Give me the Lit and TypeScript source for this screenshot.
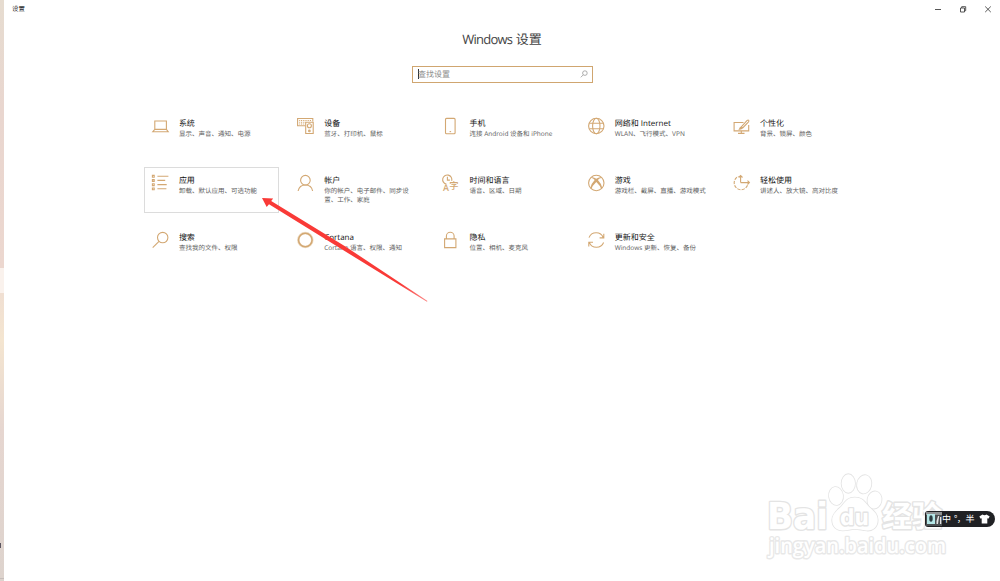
import { html, css, svg, LitElement, nothing } from "lit";
import type { SVGTemplateResult } from "lit";
import { customElement, property } from "lit/decorators.js";
import { classMap } from "lit/directives/class-map.js";

interface Category {
    icon: string;
    title: string;
    description: string;
    active?: boolean;
}

const categories: Category[] = [
    { icon: "system", title: "系统", description: "显示、声音、通知、电源" },
    { icon: "devices", title: "设备", description: "蓝牙、打印机、鼠标" },
    { icon: "phone", title: "手机", description: "连接 Android 设备和 iPhone" },
    { icon: "network", title: "网络和 Internet", description: "WLAN、飞行模式、VPN" },
    { icon: "personalize", title: "个性化", description: "背景、锁屏、颜色" },
    { icon: "apps", title: "应用", description: "卸载、默认应用、可选功能", active: true },
    { icon: "account", title: "帐户", description: "你的帐户、电子邮件、同步设置、工作、家庭" },
    { icon: "time", title: "时间和语言", description: "语音、区域、日期" },
    { icon: "gaming", title: "游戏", description: "游戏栏、截屏、直播、游戏模式" },
    { icon: "ease", title: "轻松使用", description: "讲述人、放大镜、高对比度" },
    { icon: "search", title: "搜索", description: "查找我的文件、权限" },
    { icon: "cortana", title: "Cortana", description: "Cortana 语言、权限、通知" },
    { icon: "privacy", title: "隐私", description: "位置、相机、麦克风" },
    { icon: "update", title: "更新和安全", description: "Windows 更新、恢复、备份" },
];

const icons: Record<string, SVGTemplateResult> = {
    system: svg`<path d="M2.8 3h11.6v8.4H2.8zM2.8 11.4L.8 13.7h15.4l-1.8-2.3"/>`,
    devices: svg`
        <path d="M8 7.7H.6V.5h15.2v3"/>
        <path d="M2.2 2.5h12.4M2.2 4.2h6M2.2 6h5.6" stroke-dasharray="1 .8"/>
        <path d="M8.7 4.2h7.5v11.3H8.7z"/>
        <circle cx="12.4" cy="7.8" r="2"/>
        <circle cx="12.4" cy="12.9" r=".8"/>`,
    phone: svg`<rect x="3.5" y=".4" width="9.6" height="15.3" rx="1"/><path d="M7.6 13.6h1.5"/>`,
    network: svg`
        <circle cx="8.3" cy="8" r="7.7"/>
        <ellipse cx="8.3" cy="8" rx="3.7" ry="7.7"/>
        <path d="M1.3 5.2h14M1.3 10.8h14"/>`,
    personalize: svg`
        <path d="M10.5 4.5H1.1v8.4h14.6V7M8.3 13v2.2M5 15.4h6.5"/>
        <path d="M8.3 8.8l5.6-6.1q1.2-1 1.8-.4t-.4 1.8L9.7 10z"/>
        <path class="solid" d="M8.3 8.8q-1.8-.1-2.1 1.6-.2 1-1.2 1.2 3.8.8 4.7-1.6z"/>`,
    apps: svg`
        <path d="M.4.4h1.8v1.8H.4zM.4 4.6h1.8v1.8H.4zM.4 8.8h1.8v1.8H.4zM.4 13h1.8v1.8H.4z"/>
        <path d="M5.4 1.2h11M5.4 5.4h7.8M5.4 9.6h9.3M5.4 13.8h9"/>`,
    account: svg`<circle cx="8.4" cy="5.2" r="4.8"/><path d="M1.1 16c.8-4 3.6-6 7.3-6s6.5 2 7.2 6"/>`,
    time: svg`
        <path d="M4.4 9.1A4.6 4.6 0 1 1 9.7 5.8M5.4 1.8v3.3h2.5"/>
        <text class="glyph latin" x=".9" y="16">A</text>
        <text class="glyph" x="7.2" y="13.8">字</text>`,
    gaming: svg`
        <circle cx="8.3" cy="8" r="7.7"/>
        <path class="solid" d="M3.5 2.3q2.1-.6 4.8 1.4 2.7-2 4.8-1.4l.7.8q-2-.4-3.9 2 3.7 4 4.3 7.6l-1 1.2q-1.1-3.5-4.9-7-3.8 3.5-4.9 7l-1-1.2q.6-3.6 4.3-7.6-1.9-2.4-3.9-2z"/>`,
    ease: svg`
        <path d="M14.5 10.3A6.9 6.9 0 1 1 5.5 1.4" stroke-dasharray="3.2 1.2"/>
        <path d="M7.6 7.6V.7M5.7 2.5L7.6.6l1.9 1.9M7.6 7.6h8.7M14.5 5.7l1.9 1.9-1.9 1.9"/>`,
    search: svg`<circle cx="10.7" cy="5.6" r="5.2"/><path d="M7 9.4L.7 15.7"/>`,
    cortana: svg`<circle class="halo" cx="8.3" cy="8" r="7"/><circle class="ring" cx="8.3" cy="8" r="6.8"/>`,
    privacy: svg`<path d="M2.6 6.9h11.3v8.7H2.6zM4.4 6.9V4a3.85 3.7 0 0 1 7.7 0v2.9"/>`,
    update: svg`
        <path d="M1 5.6a7.7 7.7 0 0 1 14.3.1M15.8 1.7v4.2h-4.2"/>
        <path d="M15.6 10.5a7.7 7.7 0 0 1-14.3-.1M.8 14.4v-4.2H5"/>`,
};

@customElement("category-tile")
export class CategoryTile extends LitElement {
    static styles = css`
    :host {
        display: block;
    }

    .tile {
        box-sizing: border-box;
        display: flex;
        height: 46px;
        padding: 7px 6px 0 6.4px;
        gap: 10.1px;
        border: 1px solid transparent;
    }

    .tile.active {
        border-color: #dcdcdc;
    }

    svg {
        flex: none;
        width: 17px;
        height: 17px;
        overflow: visible;
        fill: none;
        stroke: #d3a873;
        stroke-width: 1.1;
    }

    .solid, .glyph {
        fill: #d3a873;
        stroke: none;
    }

    .glyph {
        font: 500 9.3px "Noto Sans CJK SC", sans-serif;
    }

    .glyph.latin {
        font: 600 9px "Open Sans", sans-serif;
    }

    .ring {
        stroke-width: 1.5;
    }

    .halo {
        stroke: #efdfc9;
        stroke-width: 2.6;
    }

    .title {
        margin-top: 1px;
        font-size: 8px;
        line-height: 10px;
        color: #111;
        white-space: nowrap;
    }

    .description {
        width: 93px;
        font-size: 6.5px;
        line-height: 8.7px;
        color: #606060;
        margin-top: 1px;
    }
    `;

    @property() icon = "";
    @property() heading = "";
    @property() description = "";
    @property({ type: Boolean }) active = false;

    render() {
        return html`
            <div class=${classMap({ tile: true, active: this.active })}>
                <svg viewBox="0 0 17 17">${icons[this.icon] ?? nothing}</svg>
                <div>
                    <div class="title">${this.heading}</div>
                    <div class="description">${this.description}</div>
                </div>
            </div>
        `;
    }
}

@customElement("site-watermark")
export class SiteWatermark extends LitElement {
    static styles = css`
    :host {
        display: block;
        width: 190px;
        height: 95px;
    }

    svg {
        display: block;
        fill: #fff;
        stroke: #e4e4e4;
        stroke-width: 1.7;
        stroke-linejoin: round;
        paint-order: stroke;
    }

    text {
        stroke-width: 2.8;
    }

    .brand {
        font: bold 37px "DejaVu Sans", sans-serif;
    }

    .pad-text {
        font: bold 22px "DejaVu Sans", sans-serif;
    }

    .cjk {
        font: bold 30px "Noto Sans CJK SC", sans-serif;
    }

    .site {
        font: 600 21px "Open Sans", sans-serif;
        stroke: #e8e8e8;
    }
    `;

    render() {
        return html`
            <svg width="190" height="95" viewBox="0 0 190 95">
                <text class="brand" x="2" y="64" textLength="61" lengthAdjust="spacingAndGlyphs">Bai</text>
                <ellipse cx="71" cy="31" rx="7" ry="9" transform="rotate(-8 71 31)"/>
                <ellipse cx="83.3" cy="18.5" rx="6.7" ry="9.3"/>
                <ellipse cx="99.2" cy="19.3" rx="7.1" ry="9.2" transform="rotate(12 99.2 19.3)"/>
                <ellipse cx="109.5" cy="35" rx="7" ry="8.6" transform="rotate(10 109.5 35)"/>
                <path d="M89.7 32.5c8 0 10.500 5 14 9 4 4 9 7 9 13.500 0 7-5 11-11 10.500-5-.5-8-1.500-12-1.500s-7 1.500-12 1.500c-6 0-10.500-4-10.500-10.500 0-6 5-9.500 9-13.500 3.500-4 6-9 13.500-9z"/>
                <text class="pad-text" x="75" y="60" textLength="29" lengthAdjust="spacingAndGlyphs">du</text>
                <text class="cjk" x="117" y="62">经验</text>
                <text class="site" x="4" y="88" textLength="177" lengthAdjust="spacingAndGlyphs">jingyan.baidu.com</text>
            </svg>
        `;
    }
}

@customElement("app-root")
export class AppRoot extends LitElement {
    static styles = css`
    :host {
        display: flex;
        position: relative;
        width: 1000px;
        height: 581px;
        overflow: hidden;
        background: #fff;
        font-family: "Open Sans", "Noto Sans CJK SC", sans-serif;
        text-rendering: geometricPrecision;
    }

    .desktop {
        flex: none;
        display: flex;
        flex-flow: column;
        width: 4px;
        background: linear-gradient(#e6dcd0 0, #e9d6cf 110px, #ecd7cf 268px, #f0dfd2 294px, #f4e5d0 340px, #e6d6d0 430px, #ddd3cd 581px);
    }

    .desktop .band {
        height: 25px;
        margin-top: 268px;
        background: #faf2ed;
    }

    .desktop .mark {
        width: 1px;
        height: 5px;
        margin-top: 250px;
        background: #5c5560;
    }

    .desktop .edge {
        height: 1px;
        margin-top: 30px;
        background: #c6bdb9;
    }

    .window {
        flex: 1;
        display: flex;
        flex-flow: column;
    }

    .titlebar {
        display: flex;
        justify-content: space-between;
        height: 17px;
        padding: 0 8px;
        align-items: center;
        font-size: 6.4px;
        color: #222;
    }

    .titlebar svg {
        display: block;
        fill: none;
        stroke: #444;
        stroke-width: 0.9;
    }

    .buttons {
        display: flex;
        gap: 17px;
    }

    h1 {
        margin: 12px 0 0;
        font-size: 13px;
        font-weight: 400;
        line-height: 20px;
        text-align: center;
        color: #444;
    }

    h1 .latin {
        letter-spacing: -0.75px;
    }

    .search {
        box-sizing: border-box;
        display: flex;
        align-items: center;
        align-self: center;
        width: 181px;
        height: 17px;
        margin: 17px 0 0;
        padding: 0 4px 1px 5px;
        border: 1px solid #d0a670;
        font-size: 8px;
        color: #8b8b8b;
    }

    .search .caret {
        width: 1px;
        height: 10px;
        background: #333;
    }

    .search .placeholder {
        flex: 1;
        margin-left: -0.5px;
    }

    .search svg {
        fill: none;
        stroke: #999;
        stroke-width: 0.8;
    }

    .grid {
        display: grid;
        grid-template-columns: repeat(5, 134.4px);
        gap: 11px 10.9px;
        margin: 27px 0 0 140.4px;
    }

    .arrow {
        position: absolute;
        left: 260px;
        top: 195px;
    }

    site-watermark {
        position: absolute;
        left: 765px;
        top: 465px;
    }

    .ime {
        position: absolute;
        left: 925px;
        top: 510.5px;
        box-sizing: border-box;
        display: flex;
        align-items: center;
        width: 69.5px;
        height: 16px;
        padding: 0 5px 0 1px;
        border-radius: 3px 8px 8px 3px;
        background: #202124;
        color: #fff;
        font: 9px "Noto Sans CJK SC", sans-serif;
    }

    .ime .logo {
        flex: none;
        width: 16px;
        height: 14px;
    }

    .ime .punct {
        flex: 1;
        padding-left: 3px;
        white-space: nowrap;
        letter-spacing: -0.5px;
    }

    .ime .half {
        margin-right: 4px;
    }

    .ime .skin {
        flex: none;
    }
    `;

    render() {
        return html`
            <div class="desktop">
                <div class="band"></div>
                <div class="mark"></div>
                <div class="edge"></div>
            </div>
            <div class="window">
                <div class="titlebar">
                    <span>设置</span>
                    <div class="buttons">
                        <svg width="8" height="8" viewBox="0 0 8 8"><path d="M1 4.5h6"/></svg>
                        <svg width="8" height="8" viewBox="0 0 8 8"><path d="M1.500 3h4v4h-4zM2.700 3V1.700h4v4H5.500"/></svg>
                        <svg width="8" height="8" viewBox="0 0 8 8"><path d="M1.200 1.500l5.600 5.600M6.800 1.500L1.200 7.100"/></svg>
                    </div>
                </div>
                <h1><span class="latin">Windows</span> 设置</h1>
                <div class="search">
                    <span class="caret"></span>
                    <span class="placeholder">查找设置</span>
                    <svg width="8" height="8" viewBox="0 0 8 8"><circle cx="4.900" cy="3.100" r="2.300"/><path d="M3.300 4.800L.8 7.300"/></svg>
                </div>
                <div class="grid">
                    ${categories.map((c) => html`
                        <category-tile
                            .icon=${c.icon}
                            .heading=${c.title}
                            .description=${c.description}
                            .active=${!!c.active}
                        ></category-tile>
                    `)}
                </div>
            </div>
            <svg class="arrow" width="170" height="110" viewBox="0 0 170 110">
                <defs>
                    <linearGradient id="fade" gradientUnits="userSpaceOnUse" x1="100" y1="62" x2="167" y2="106.500">
                        <stop offset=".6" stop-color="#f93a37"/>
                        <stop offset="1" stop-color="#f93a37" stop-opacity=".6"/>
                    </linearGradient>
                </defs>
                <path fill="url(#fade)" d="M2 3l11.200.4-2 2.600L85 51.200l82.500 54.800-.6.8L83 55 9 9.300 6.700 12z"/>
            </svg>
            <site-watermark></site-watermark>
            <div class="ime">
                <svg class="logo" viewBox="0 0 16 14">
                    <path d="M0 0h16v3H0z" fill="#8f9293"/>
                    <path d="M0 3h16v11H0z" fill="#4b4f51"/>
                    <path d="M1 2h8v10H1z" fill="#b4e6e6"/>
                    <ellipse cx="5" cy="6.500" rx="1.700" ry="3.200" fill="#2c3c40"/>
                    <path d="M10.500 9l1.500-5h1.200l-1.200 8h-1.500zM14 5h1.300v7H14z" fill="#e2e2e2"/>
                </svg>
                <span>中</span>
                <span class="punct">°，</span>
                <span class="half">半</span>
                <svg class="skin" width="11" height="10" viewBox="0 0 11 10"><path d="M3.500.5q2 1.600 4 0L10.700 2.500 9.300 4.800 8.300 4.300V9.500H2.700V4.300L1.700 4.800.3 2.500z" fill="#fff"/></svg>
            </div>
        `;
    }
}
